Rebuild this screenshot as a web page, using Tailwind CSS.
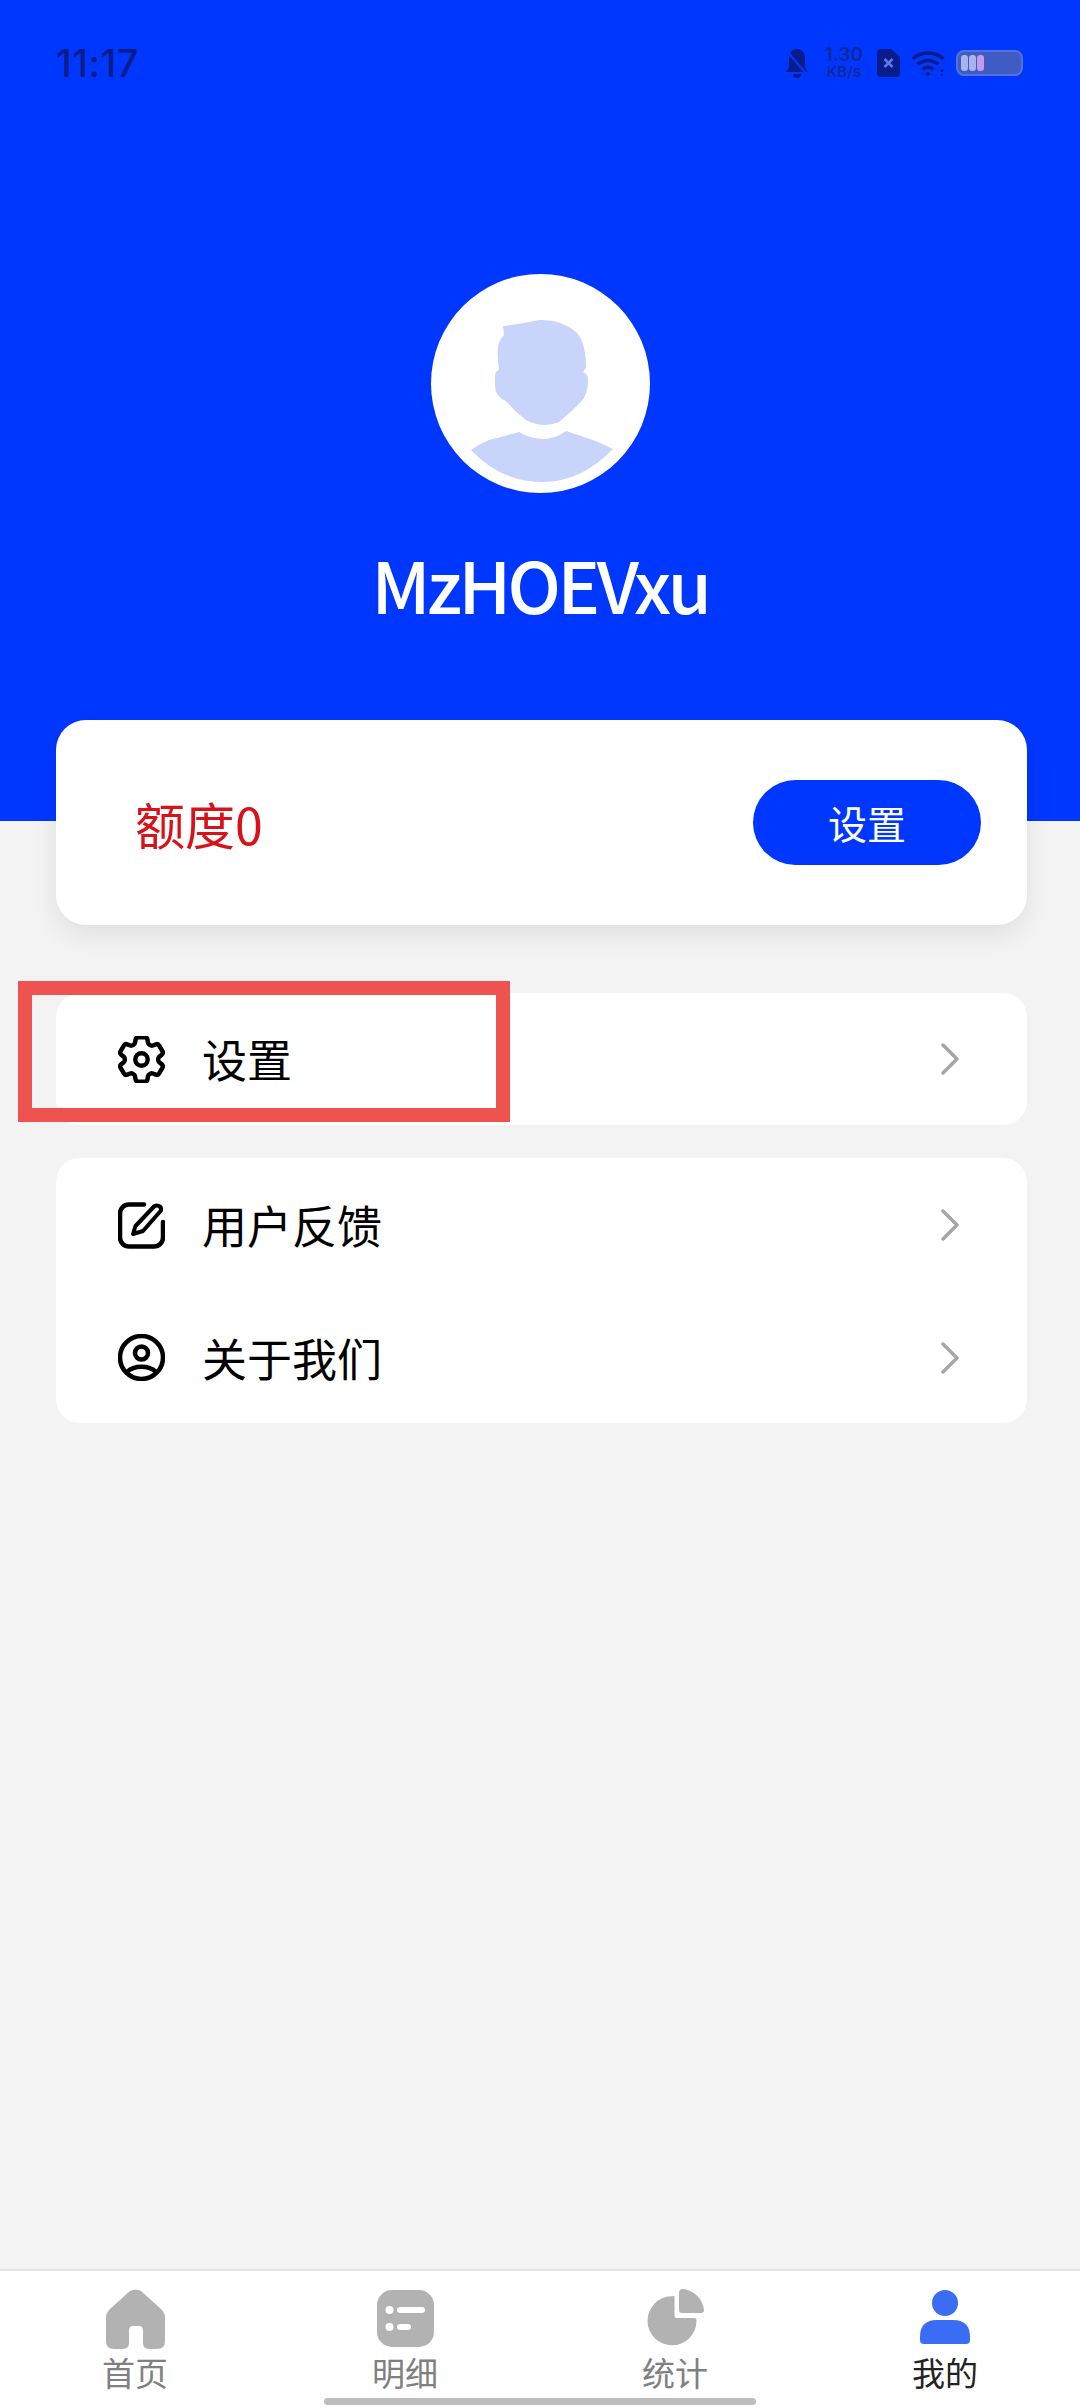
<!DOCTYPE html>
<html lang="zh">
<head>
    <meta charset="UTF-8">
    <meta name="viewport" content="width=device-width, initial-scale=1.0">
    <title>我的</title>
    <script src="https://cdn.jsdelivr.net/npm/@tailwindcss/browser@4"></script>
</head>
<body class="font-['Noto_Sans_CJK_SC','Noto_Sans',sans-serif]">

<div class="relative w-[1080px] h-[2408px] overflow-hidden bg-[#f3f3f4] flex flex-col">

    <!-- header -->
    <header class="h-[821px] shrink-0 bg-[#0037ff] flex flex-col items-center">
        <div class="w-full h-[38px] mt-[44px] pl-[56px] pr-[57px] flex items-center justify-between text-[#0a1c8c]">
            <span class="font-['Inter',sans-serif] text-[38px] leading-[38px] font-medium tracking-[0.5px]">11:17</span>
            <div class="flex items-center">
                <svg class="w-[24px] h-[30px]" viewBox="0 0 24 30">
                    <path d="M12 1c5 0 8 4 8 9v9l3 5H1l3-5v-9c0-5 3-9 8-9zM8 26h8a4 4 0 0 1-8 0z" fill="currentColor"/>
                    <path d="M1 2l22 26" stroke="#0037ff" stroke-width="2"/>
                </svg>
                <div class="w-[44px] ml-[13px] flex flex-col items-center font-['Inter',sans-serif] font-semibold text-[#10289a]">
                    <span class="text-[19px] leading-[18px]">1.30</span>
                    <span class="text-[15px] leading-[16px]">KB/s</span>
                </div>
                <svg class="w-[23px] h-[28px] ml-[11px]" viewBox="0 0 23 28">
                    <path d="M4 0h10l9 8v16a4 4 0 0 1-4 4H4a4 4 0 0 1-4-4V4a4 4 0 0 1 4-4z" fill="currentColor"/>
                    <path d="M7.500 10l8 8M15.500 10l-8 8" stroke="#5d78e6" stroke-width="2.500"/>
                </svg>
                <svg class="w-[34px] h-[26px] ml-[11px]" viewBox="0 0 34 26" fill="none" stroke="currentColor" stroke-width="3.500">
                    <path d="M1.500 9C10 1 24 1 32.500 9M6.500 14.500C12 9 22 9 27.500 14.500M11.500 19.500C14.500 16.500 19.500 16.500 22.500 19.500"/>
                    <circle cx="17" cy="24" r="1.500" fill="currentColor" stroke-width="1"/>
                    <path d="M31 19v3M31 24v1.500" stroke-width="2.500"/>
                </svg>
                <div class="w-[67px] h-[26px] ml-[11px] p-[3px] rounded-[8px] bg-[#3f5cc4] border-2 border-[#5571d6] flex gap-[1px]">
                    <span class="w-[7px] rounded-[3px] bg-[#aab4ec]"></span>
                    <span class="w-[7px] rounded-[3px] bg-[#aab4ec]"></span>
                    <span class="w-[7px] rounded-[3px] bg-[#c39be8]"></span>
                </div>
            </div>
        </div>

        <div class="w-[219px] h-[219px] mt-[192px] rounded-full bg-white">
            <svg class="w-full h-full" viewBox="0 0 219 219" fill="#c9d4fa">
                <path d="M72 52Q90 50 108 46Q130 45 145 58Q155 68 155 94L152 98Q157 100 157 106Q157 120 150 128Q140 138 128 148Q112 155 95 146Q84 138 76 128Q64 122 64 112V102Q64 97 68 96Q66 80 67 73Q68 66 73 61Z"/>
                <path d="M40 176Q48 170 58 166Q74 162 88 158Q100 165 112 165Q124 165 135 157L162 166Q172 170 182 175Q150 208 112 208Q70 208 40 176Z"/>
            </svg>
        </div>
        <h1 class="mt-[40px] text-[71px] leading-[100px] font-medium text-white tracking-[-3.500px]">MzHOEVxu</h1>
    </header>

    <main class="flex flex-col -mt-[101px] mx-[56px] w-[971px] relative">
        <!-- quota -->
        <section class="h-[205px] rounded-[30px] bg-white shadow-[0_10px_24px_rgba(0,0,0,0.08)] pl-[79px] pr-[46px] flex items-center justify-between">
            <span class="text-[50px] leading-[60px] text-[#d9121a]">额度0</span>
            <button class="w-[228px] h-[85px] rounded-full bg-[#0037ff] text-white text-[39px] leading-[85px]">设置</button>
        </section>

        <!-- settings -->
        <section class="mt-[68px] h-[132px] rounded-[24px] bg-white">
            <a class="h-[132px] pl-[62px] pr-[68px] flex items-center">
                <svg class="w-[47px] h-[47px]" viewBox="2.500 2.500 19 19" fill="none" stroke="#000" stroke-width="1.800" stroke-linejoin="round">
                    <path d="M9.594 3.94c.09-.542.56-.94 1.11-.94h2.593c.55 0 1.02.398 1.11.94l.213 1.281c.063.374.313.686.645.87.074.04.147.083.22.127.325.196.72.257 1.075.124l1.217-.456a1.125 1.125 0 0 1 1.37.49l1.296 2.247a1.125 1.125 0 0 1-.26 1.431l-1.003.827c-.293.241-.438.613-.43.992a7.723 7.723 0 0 1 0 .255c-.008.378.137.75.43.991l1.004.827c.424.35.534.955.26 1.43l-1.298 2.247a1.125 1.125 0 0 1-1.369.491l-1.217-.456c-.355-.133-.75-.072-1.076.124a6.47 6.47 0 0 1-.22.128c-.331.183-.581.495-.644.869l-.213 1.281c-.09.543-.56.94-1.11.94h-2.594c-.55 0-1.019-.398-1.11-.94l-.213-1.281c-.062-.374-.312-.686-.644-.87a6.52 6.52 0 0 1-.22-.127c-.325-.196-.72-.257-1.076-.124l-1.217.456a1.125 1.125 0 0 1-1.369-.49l-1.297-2.247a1.125 1.125 0 0 1 .26-1.431l1.004-.827c.292-.24.437-.613.43-.991a6.932 6.932 0 0 1 0-.255c.007-.38-.138-.751-.43-.992l-1.004-.827a1.125 1.125 0 0 1-.26-1.43l1.297-2.247a1.125 1.125 0 0 1 1.37-.491l1.216.456c.356.133.751.072 1.076-.124.072-.044.146-.086.22-.128.332-.183.582-.495.644-.869l.214-1.28Z"/>
                    <circle cx="12" cy="12" r="2.500"/>
                </svg>
                <span class="ml-[37px] text-[45px] leading-[60px] text-black">设置</span>
                <svg class="ml-auto w-[18px] h-[32px]" viewBox="0 0 18 32" fill="none" stroke="#a6a6a6" stroke-width="3.500" stroke-linecap="round" stroke-linejoin="round">
                    <path d="M2 2l14 14L2 30"/>
                </svg>
            </a>
        </section>

        <!-- feedback, about -->
        <section class="mt-[33px] h-[265px] rounded-[24px] bg-white">
            <a class="h-[134px] pl-[62px] pr-[68px] flex items-center">
                <svg class="w-[47px] h-[47px]" viewBox="0 0 47 47" fill="none" stroke="#000" stroke-width="4.500" stroke-linecap="round" stroke-linejoin="round">
                    <path d="M26 2.500H11a9 9 0 0 0-9 9v24a9 9 0 0 0 9 9h25a9 9 0 0 0 9-9V20"/>
                    <path d="M15 32l2.500-8L36 4.500c2-2 8-1 7 4L25 29z" stroke-width="4"/>
                </svg>
                <span class="ml-[37px] text-[45px] leading-[60px] text-black">用户反馈</span>
                <svg class="ml-auto w-[18px] h-[32px]" viewBox="0 0 18 32" fill="none" stroke="#a6a6a6" stroke-width="3.500" stroke-linecap="round" stroke-linejoin="round">
                    <path d="M2 2l14 14L2 30"/>
                </svg>
            </a>
            <a class="h-[131px] pl-[62px] pr-[68px] flex items-center">
                <svg class="w-[47px] h-[47px]" viewBox="0 0 47 47" fill="none" stroke="#000" stroke-width="4.500">
                    <circle cx="23.500" cy="23.500" r="21.500"/>
                    <circle cx="23.500" cy="19" r="6.500"/>
                    <path d="M9 38c7-7 22-7 29 0"/>
                </svg>
                <span class="ml-[37px] text-[45px] leading-[60px] text-black">关于我们</span>
                <svg class="ml-auto w-[18px] h-[32px]" viewBox="0 0 18 32" fill="none" stroke="#a6a6a6" stroke-width="3.500" stroke-linecap="round" stroke-linejoin="round">
                    <path d="M2 2l14 14L2 30"/>
                </svg>
            </a>
        </section>
    </main>

    <!-- tab bar -->
    <nav class="mt-auto h-[139px] shrink-0 bg-white border-t-2 border-[#e4e4e4] grid grid-cols-4 text-[#808080] text-[33px] leading-[32px]">
        <a class="flex flex-col items-center pt-[18px]">
            <svg class="w-[59px] h-[60px]" viewBox="0 0 59 60" fill="#b2b2b2">
                <path d="M24 2Q29.500-1 35 2L55 20Q59 24 59 28V52Q59 60 51 60H44Q37 60 37 54V42Q37 37 33 37H27Q23 37 23 42V54Q23 60 16 60H8Q0 60 0 52V28Q0 24 4 20Z"/>
            </svg>
            <span class="mt-[7px]">首页</span>
        </a>
        <a class="flex flex-col items-center pt-[18px]">
            <svg class="w-[57px] h-[60px]" viewBox="0 0 57 60">
                <rect y="1" width="57" height="57" rx="15" fill="#b2b2b2"/>
                <circle cx="12.500" cy="21" r="4" fill="#fff"/>
                <circle cx="12.500" cy="38" r="4" fill="#fff"/>
                <rect x="20" y="18" width="28" height="6" rx="3" fill="#fff"/>
                <rect x="20" y="35" width="14" height="6" rx="3" fill="#fff"/>
            </svg>
            <span class="mt-[7px]">明细</span>
        </a>
        <a class="flex flex-col items-center pt-[18px]">
            <svg class="w-[57px] h-[60px]" viewBox="0 0 57 60" fill="#b2b2b2">
                <path d="M27.500 7V27Q27.500 29 29.500 29H47Q50 29 49.500 32A24.500 24.500 0 1 1 24.500 7.300Q27.500 7 27.500 7Z"/>
                <path d="M32 4Q32 0 36 0A24 24 0 0 1 57 21Q57 24 54 24H35Q32 24 32 21Z"/>
            </svg>
            <span class="mt-[7px]">统计</span>
        </a>
        <a class="flex flex-col items-center pt-[18px] text-[#222]">
            <svg class="w-[50px] h-[60px]" viewBox="0 0 50 60" fill="#3a6cf5">
                <circle cx="25" cy="14" r="13"/>
                <path d="M0 51Q0 55 4 55H46Q50 55 50 51V48Q50 31 33 31H17Q0 31 0 48Z"/>
            </svg>
            <span class="mt-[7px]">我的</span>
        </a>
    </nav>

    <!-- home indicator -->
    <div class="absolute left-[324px] top-[2398px] w-[432px] h-[7px] rounded-full bg-[#bdbdbd]"></div>

    <!-- red highlight over the settings row -->
    <div class="absolute left-[18px] top-[981px] w-[492px] h-[141px] border-[14px] border-[#ee5350]"></div>
</div>

</body>
</html>
